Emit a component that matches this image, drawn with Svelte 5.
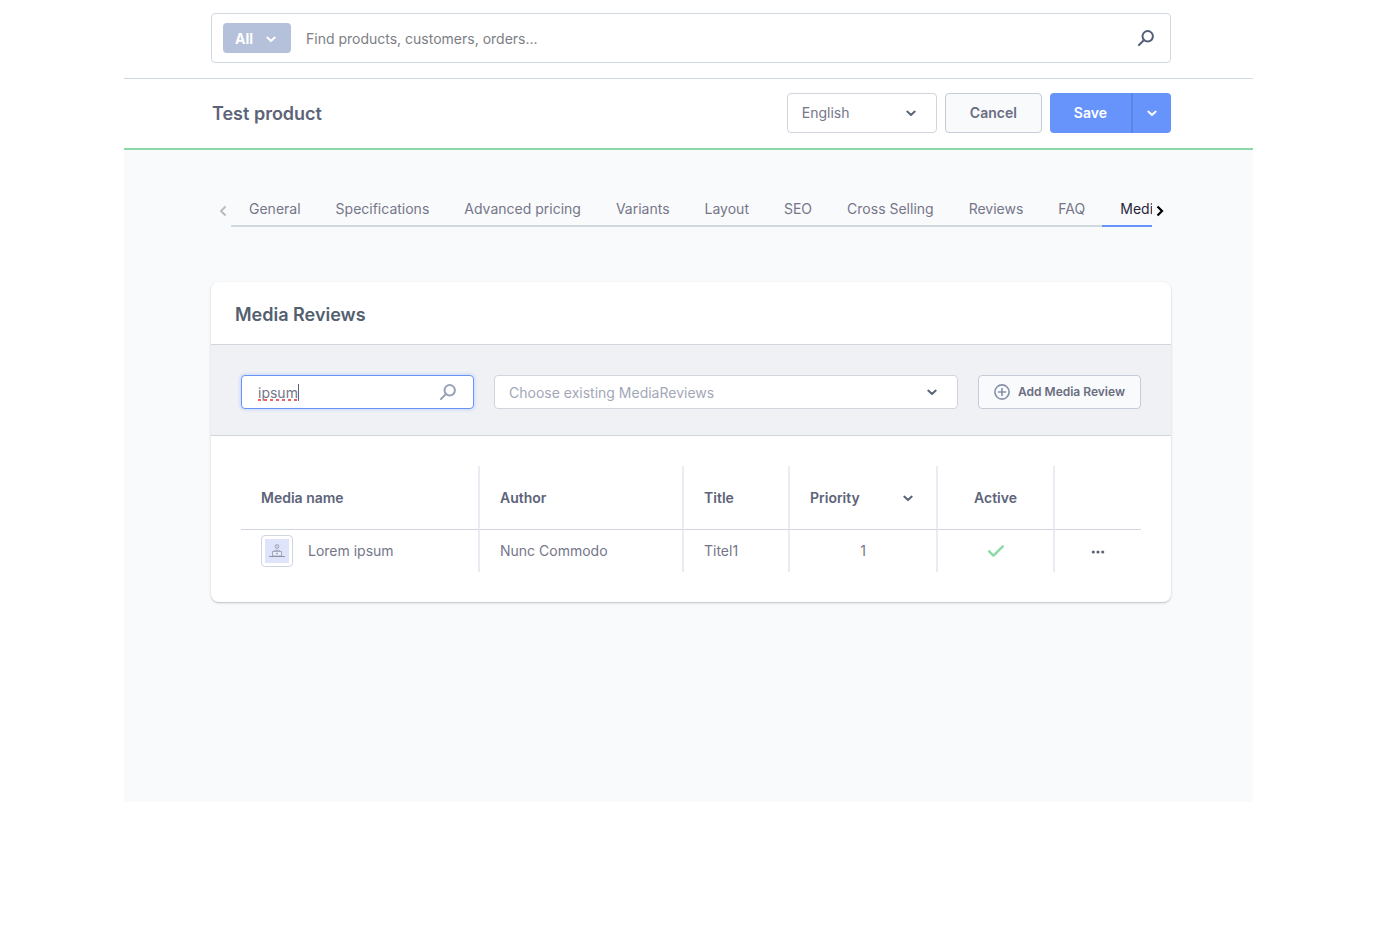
<script>
  const tabs = ['General', 'Specifications', 'Advanced pricing', 'Variants', 'Layout', 'SEO', 'Cross Selling', 'Reviews', 'FAQ', 'Media Reviews'];
  let active = $state('Media Reviews');
  let term = $state('ipsum');
  let rows = [{ name: 'Lorem ipsum', author: 'Nunc Commodo', title: 'Titel1', priority: 1, active: true }];
</script>

{#snippet chevron(cls)}
  <svg class="chevron {cls}" viewBox="0 0 10 10" aria-hidden="true"><path d="M1.3 3.6 5 7 8.7 3.6" /></svg>
{/snippet}

{#snippet magnifier()}
  <svg class="magnifier" viewBox="0 0 16 16" aria-hidden="true"><circle cx="9.7" cy="6.3" r="5.2" /><path d="M6 10 1 15" /></svg>
{/snippet}

<div class="page">
  <header class="search-bar">
    <form class="search" role="search" onsubmit={(e) => e.preventDefault()}>
      <button type="button" class="scope">All {@render chevron('light')}</button>
      <input type="search" aria-label="Search" placeholder="Find products, customers, orders..." />
      <button class="icon-button" aria-label="Search">{@render magnifier()}</button>
    </form>
  </header>

  <div class="title-bar">
    <h1>Test product</h1>
    <div class="actions">
      <div class="select language">
        <select aria-label="Language"><option>English</option></select>
        {@render chevron('')}
      </div>
      <button class="button cancel">Cancel</button>
      <div class="split">
        <button class="save">Save</button>
        <button class="more" aria-label="More save options">{@render chevron('light')}</button>
      </div>
    </div>
  </div>

  <main>
    <nav class="tabs">
      <button class="arrow" aria-label="Previous tabs" disabled>
        <svg viewBox="0 0 8 12" aria-hidden="true"><path d="M6.500 1.500 2 6 6.500 10.500" /></svg>
      </button>
      <div class="tab-list">
        {#each tabs as tab}
          <a href="#tab" class:active={tab === active} onclick={(e) => { e.preventDefault(); active = tab; }}>{tab}</a>
        {/each}
      </div>
      <button class="arrow next" aria-label="Next tabs">
        <svg viewBox="0 0 8 12" aria-hidden="true"><path d="M1.500 1.500 6 6 1.500 10.500" /></svg>
      </button>
    </nav>

    <section class="card">
      <h2>Media Reviews</h2>
      <div class="toolbar">
        <div class="filter">
          <input type="text" aria-label="Filter reviews" bind:value={term} spellcheck="false" />
          {#if term === 'ipsum'}
            <span class="squiggle"></span>
            <span class="caret"></span>
          {/if}
          {@render magnifier()}
        </div>
        <div class="select existing">
          <select aria-label="Choose existing MediaReviews"><option>Choose existing MediaReviews</option></select>
          {@render chevron('')}
        </div>
        <button class="button add">
          <svg class="plus" viewBox="0 0 16 16" aria-hidden="true"><circle cx="8" cy="8" r="7.1" /><path d="M8 4.5v7M4.5 8h7" /></svg>
          Add Media Review
        </button>
      </div>

      <div class="grid">
        <table>
          <colgroup>
            <col class="c-name" /><col class="c-author" /><col class="c-title" /><col class="c-priority" /><col class="c-active" /><col class="c-menu" />
          </colgroup>
          <thead>
            <tr>
              <th>Media name</th>
              <th>Author</th>
              <th>Title</th>
              <th><span class="sort">Priority {@render chevron('')}</span></th>
              <th class="center">Active</th>
              <th aria-label="Actions"></th>
            </tr>
          </thead>
          <tbody>
            {#each rows as row}
              <tr>
                <td>
                  <div class="media">
                    <span class="thumb">
                      <svg viewBox="0 0 24 24" aria-hidden="true">
                        <g fill="none" stroke="#a4a8bd">
                          <circle cx="12" cy="7.500" r="1.900" fill="#cdd2e8" />
                          <path d="M7.500 17v-2.500q.3-2.800 3-3.200h3q2.700.4 3 3.200V17" />
                          <path d="M7.500 12.500h9V17h-9z" fill="#e9ecfb" />
                          <path d="M4 17.500h16" stroke="#9094aa" />
                        </g>
                        <circle cx="12" cy="14.500" r=".8" fill="#8286a0" />
                      </svg>
                    </span>
                    {row.name}
                  </div>
                </td>
                <td>{row.author}</td>
                <td>{row.title}</td>
                <td class="center">{row.priority}</td>
                <td class="center">
                  {#if row.active}
                    <svg class="check" viewBox="0 0 16 12" role="img" aria-label="Active"><path d="M1.2 6.300 5.500 10.600 14.800 1.400" /></svg>
                  {/if}
                </td>
                <td class="center">
                  <button class="dots" aria-label="Row actions">
                    <svg viewBox="0 0 14 4" aria-hidden="true"><circle cx="2.300" cy="2" r="1.600" /><circle cx="7" cy="2" r="1.600" /><circle cx="11.700" cy="2" r="1.600" /></svg>
                  </button>
                </td>
              </tr>
            {/each}
          </tbody>
        </table>
      </div>
    </section>
  </main>
</div>

<style>
  :global(body) { background: #fff; }
  * { box-sizing: border-box; }
  .page {
    margin: 0 131px 0 124px;
    font-family: Inter, sans-serif;
    font-size: 14px;
    line-height: 20px;
    color: #757689;
  }
  button, input, select { font: inherit; color: inherit; margin: 0; padding: 0; border: 0; background: none; outline: 0; }
  button { cursor: pointer; }
  h1, h2 { margin: 0; font-size: 18px; line-height: 24px; font-weight: 600; color: #52606f; }
  svg { display: block; flex: none; }

  .chevron { width: 10px; height: 10px; fill: none; stroke: #5b6478; stroke-width: 2; stroke-linecap: round; stroke-linejoin: round; }
  .chevron.light { stroke: #fff; }
  .magnifier { width: 16px; height: 16px; fill: none; stroke: #565f78; stroke-width: 2; stroke-linecap: round; }

  .search-bar { padding: 13px 82px 15px 87px; border-bottom: 1px solid #d1d9e0; }
  .search { display: flex; align-items: center; height: 50px; padding: 0 16px 0 11px; border: 1px solid #d1d9e0; border-radius: 4px; }
  .scope { display: flex; align-items: center; justify-content: space-between; width: 68px; height: 30px; padding: 2px 15px 0 12px; border-radius: 4px; background: #b5c0da; color: #fff; font-weight: 700; }
  .search input { flex: 1; min-width: 0; padding-left: 15px; height: 30px; }
  .search input::placeholder { color: #7d7e84; opacity: 1; }

  .title-bar { display: flex; align-items: center; justify-content: space-between; padding: 14px 82px 15px 88px; border-bottom: 2px solid #8bdaa5; }
  h1 { padding-top: 2px; color: #5d6379; }
  .actions { display: flex; gap: 8px; height: 40px; }
  .button { border: 1px solid #c6cbd8; border-radius: 4px; background: #f9fafc; font-weight: 600; color: #696d80; }
  .cancel { padding: 0 24px; }
  .select { position: relative; display: flex; align-items: center; border: 1px solid #d1d5de; border-radius: 4px; background: #fff; }
  .select select { width: 100%; height: 100%; appearance: none; padding: 0 14px; }
  .select .chevron { position: absolute; right: 20px; pointer-events: none; }
  .language { width: 150px; }
  .split { display: flex; border-radius: 4px; overflow: hidden; background: #6794fb; color: #fff; }
  .save { padding: 0 24px; font-weight: 600; }
  .more { display: flex; align-items: center; justify-content: center; width: 40px; border-left: 2px solid #5b86e6; }

  main { padding: 43px 82px 200px 87px; background: #f9fafc; }
  .tabs { display: flex; align-items: flex-start; height: 34px; padding-right: 4px; }
  .tab-list { display: flex; flex: 1; min-width: 0; overflow: hidden; box-shadow: inset 0 -2px #d1d9e0; }
  .tab-list a { flex: none; height: 34px; padding: 6px 17px 0 18px; color: inherit; text-decoration: none; }
  .tab-list a.active { color: #27253a; box-shadow: inset 0 -2px #6794fb; }
  .arrow { display: flex; width: 20px; height: 34px; padding: 12px 0 0 8px; color: #b6b9be; }
  .arrow svg { width: 8px; height: 12px; fill: none; stroke: currentColor; stroke-width: 1.800; }
  .arrow.next { width: 15px; padding-left: 4px; color: #000; }
  .arrow.next svg { stroke-width: 2.200; }

  .card { margin-top: 55px; border-radius: 8px; background: #fff; box-shadow: 0 1px 1px rgba(0, 0, 0, .1), 0 1px 3px rgba(0, 0, 0, .15); }
  .card h2 { padding: 21px 24px 17px; }
  .toolbar { display: flex; gap: 20px; padding: 30px; height: 92px; border: solid #d1d5de; border-width: 1px 0; background: #f0f1f5; }
  .filter { position: relative; display: flex; align-items: center; width: 233px; height: 34px; border: 1px solid #6794fb; border-radius: 4px; background: #fff; box-shadow: 0 0 4px #b5cbfd; }
  .filter input { width: 100%; height: 32px; padding: 0 40px 0 16px; }
  .filter .magnifier { position: absolute; right: 17px; stroke: #98a2b8; }
  .squiggle { position: absolute; left: 16px; bottom: 7px; width: 40px; height: 2px; background: repeating-linear-gradient(90deg, #e8626a 0 3px, transparent 3px 6px); pointer-events: none; }
  .caret { position: absolute; left: 56px; width: 1px; height: 17px; background: #5d6379; pointer-events: none; }
  .existing { flex: 1; height: 34px; color: #a3a7b8; }
  .existing select { padding-top: 2px; }
  .add { display: flex; align-items: center; gap: 8px; height: 34px; padding: 0 15px; font-size: 12px; }
  .plus { width: 16px; height: 16px; fill: none; stroke: #8591aa; stroke-width: 1.600; stroke-linecap: round; }

  .grid { padding: 30px; }
  table { width: 100%; table-layout: fixed; border-collapse: separate; border-spacing: 0; }
  .c-name { width: 239px; } .c-author { width: 204px; } .c-title { width: 106px; } .c-priority { width: 148px; } .c-active { width: 117px; }
  th, td { padding: 0 20px; text-align: left; border-right: 2px solid #ebecf3; }
  th:last-child, td:last-child { border-right: 0; }
  th { height: 64px; border-bottom: 1px solid #d1d5de; font-weight: 600; color: #5d6379; }
  td { height: 42px; }
  .center { text-align: center; }
  .sort { display: flex; align-items: center; justify-content: space-between; padding-right: 3px; }
  .media { display: flex; align-items: center; gap: 15px; }
  .thumb { width: 32px; height: 32px; padding: 3px; border: 1px solid #d1d5de; border-radius: 4px; }
  .thumb svg { width: 24px; height: 24px; background: #dfe4fb; }
  .check { width: 16px; height: 12px; margin: 0 auto; fill: none; stroke: #8bdaa5; stroke-width: 2.400; stroke-linecap: round; stroke-linejoin: round; }
  .dots { padding: 8px 4px; vertical-align: middle; }
  .dots svg { width: 14px; height: 4px; fill: #5d6379; }
</style>
